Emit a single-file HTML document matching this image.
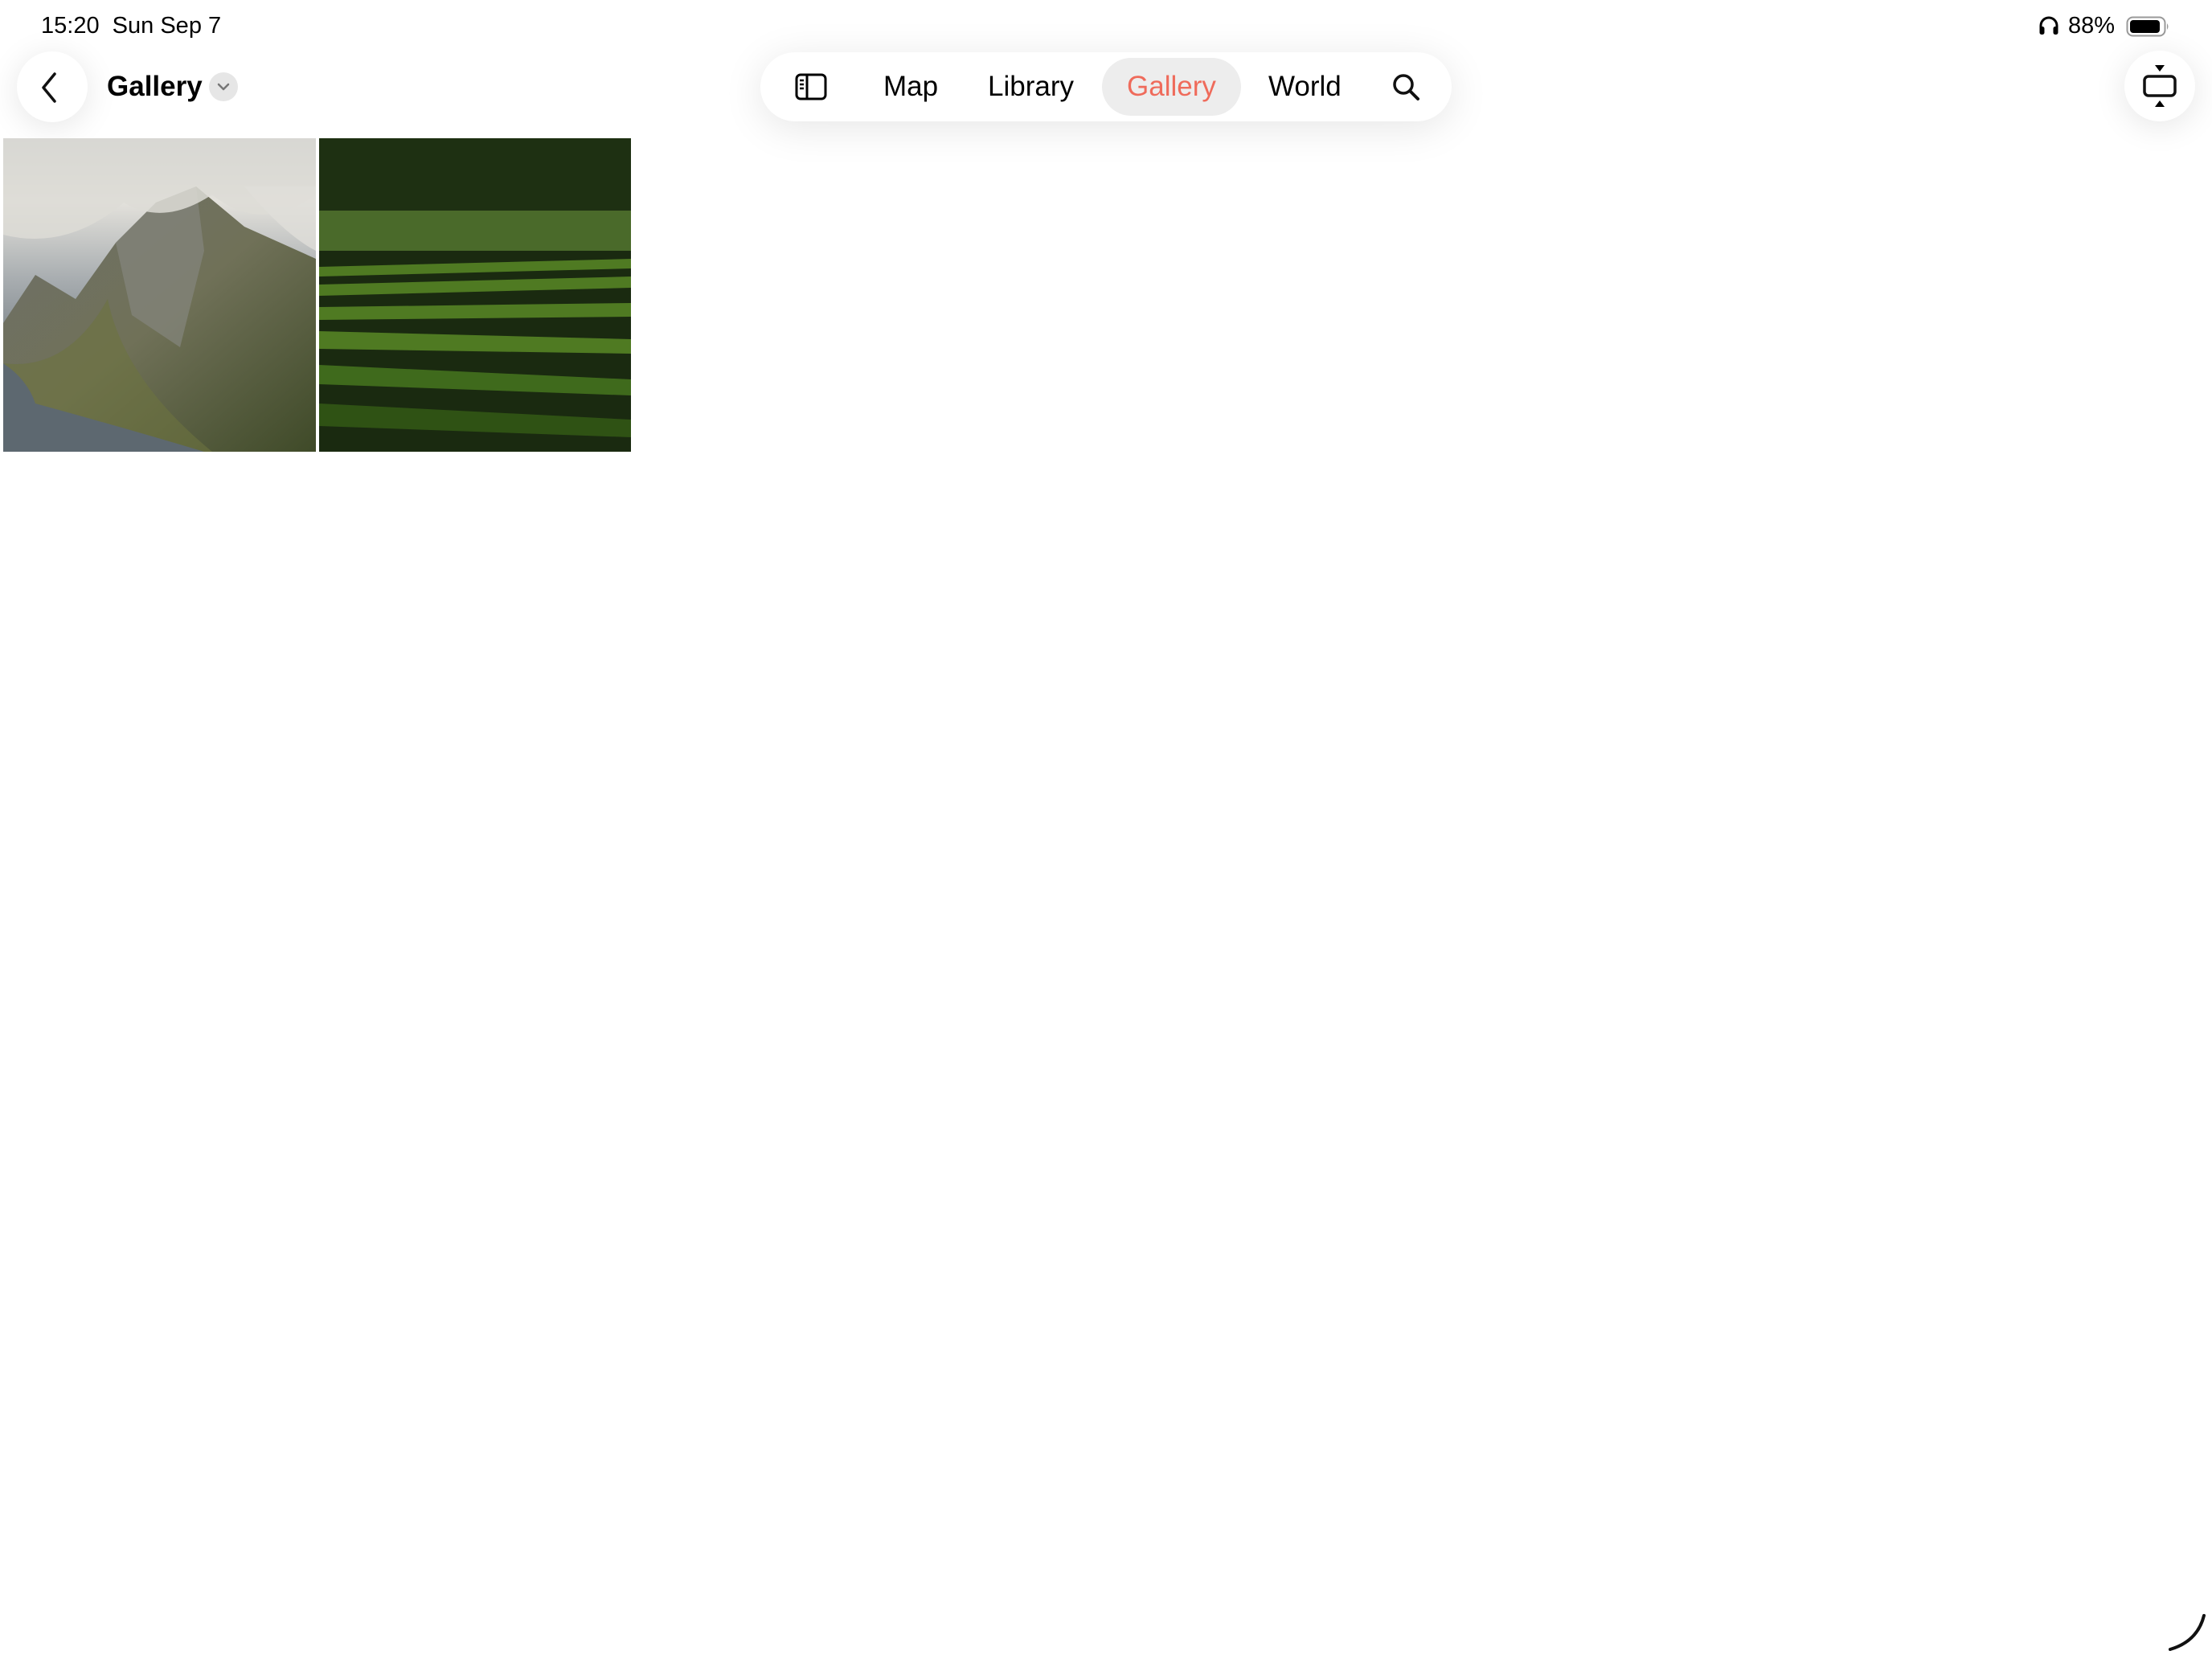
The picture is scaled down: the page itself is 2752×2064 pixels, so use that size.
<!DOCTYPE html>
<html><head><meta charset="utf-8"><style>
html,body{margin:0;padding:0;background:#fff;width:2752px;height:2064px;overflow:hidden;position:relative;font-family:"Liberation Sans",sans-serif;color:#000}
.abs{position:absolute}
.st{font-size:29px;top:16px}
.circ{position:absolute;width:88px;height:88px;border-radius:50%;background:#fff;box-shadow:0 6px 40px rgba(0,0,0,0.10)}
.pill{left:946px;top:65px;width:860px;height:86px;border-radius:43px;background:#fff;box-shadow:0 8px 50px rgba(0,0,0,0.10)}
.nav{font-size:35px;top:87px;line-height:42px}
</style></head><body>
<div class="abs st" style="left:51px">15:20&nbsp;&nbsp;Sun Sep 7</div>
<svg class="abs" style="left:2536px;top:19px" width="26" height="26" viewBox="0 0 26 26"><path d="M3 20 V13 A10 10 0 0 1 23 13 V20" fill="none" stroke="#000" stroke-width="3"/><rect x="1.5" y="14" width="6" height="10" rx="2.5"/><rect x="18.5" y="14" width="6" height="10" rx="2.5"/></svg>
<div class="abs st" style="left:2573px">88%</div>
<svg class="abs" style="left:2645px;top:20px" width="56" height="26" viewBox="0 0 56 26"><rect x="1.5" y="1.5" width="47" height="23" rx="7" fill="none" stroke="#999" stroke-width="2"/><rect x="5" y="5" width="37" height="16" rx="4"/><path d="M51 9 Q54 13 51 17Z" fill="#999"/></svg>

<div class="circ" style="left:21px;top:64px"></div>
<svg class="abs" style="left:46px;top:88px" width="30" height="42" viewBox="0 0 30 42"><path d="M22 4 L8 21 L22 38" fill="none" stroke="#111" stroke-width="3.5" stroke-linecap="round" stroke-linejoin="round"/></svg>
<div class="abs" style="left:133px;top:87px;font-size:35px;font-weight:bold;line-height:42px">Gallery</div>
<div class="abs" style="left:260px;top:90px;width:36px;height:36px;border-radius:50%;background:#e6e6e6"></div>
<svg class="abs" style="left:260px;top:90px" width="36" height="36" viewBox="0 0 36 36"><path d="M12 15 L18 21 L24 15" fill="none" stroke="#777" stroke-width="2.5" stroke-linecap="round" stroke-linejoin="round"/></svg>

<div class="abs pill"></div>
<div class="abs" style="left:1371px;top:72px;width:173px;height:72px;border-radius:36px;background:#ededed"></div>
<svg class="abs" style="left:988px;top:90px" width="42" height="36" viewBox="0 0 42 36"><rect x="3" y="3" width="36" height="30" rx="5" fill="none" stroke="#000" stroke-width="3"/><line x1="16" y1="3" x2="16" y2="33" stroke="#000" stroke-width="3"/><line x1="7" y1="10" x2="12" y2="10" stroke="#000" stroke-width="2.5"/><line x1="7" y1="15" x2="12" y2="15" stroke="#000" stroke-width="2.5"/><line x1="7" y1="20" x2="12" y2="20" stroke="#000" stroke-width="2.5"/></svg>
<div class="abs nav" style="left:1099px">Map</div>
<div class="abs nav" style="left:1229px">Library</div>
<div class="abs nav" style="left:1402px;color:#ef6b5b">Gallery</div>
<div class="abs nav" style="left:1578px">World</div>
<svg class="abs" style="left:1731px;top:90px" width="38" height="38" viewBox="0 0 38 38"><circle cx="15" cy="15" r="11" fill="none" stroke="#111" stroke-width="3.5"/><line x1="23" y1="23" x2="33" y2="33" stroke="#111" stroke-width="4" stroke-linecap="round"/></svg>

<div class="circ" style="left:2643px;top:63px"></div>
<svg class="abs" style="left:2663px;top:78px" width="48" height="58" viewBox="0 0 48 58"><path d="M18 3 H30 L24 11Z"/><rect x="5" y="17" width="38" height="24" rx="5" fill="none" stroke="#111" stroke-width="3.5"/><path d="M18 55 H30 L24 47Z"/></svg>

<svg class="abs" style="left:4px;top:172px" width="389" height="390" viewBox="0 0 389 390">
<defs><linearGradient id="sky" x1="0" y1="0" x2="0" y2="1"><stop offset="0" stop-color="#b8bcbf"/><stop offset="0.2" stop-color="#e4e2dc"/><stop offset="0.45" stop-color="#a8adb0"/><stop offset="0.6" stop-color="#8a9196"/></linearGradient>
<linearGradient id="mt" x1="0" y1="0" x2="1" y2="1"><stop offset="0" stop-color="#6e706a"/><stop offset="0.5" stop-color="#707158"/><stop offset="1" stop-color="#3f4a28"/></linearGradient></defs>
<rect width="389" height="390" fill="url(#sky)"/>
<path d="M0 230 L40 170 L90 200 L140 130 L190 80 L240 60 L300 110 L389 150 L389 390 L0 390Z" fill="url(#mt)"/>
<path d="M140 130 L190 80 L240 60 L250 140 L220 260 L160 220Z" fill="#85867d" opacity="0.7"/>
<path d="M0 280 Q80 290 130 200 Q150 300 260 390 L0 390Z" fill="#6d7340" opacity="0.6"/>
<path d="M0 280 Q30 300 40 330 Q150 360 250 390 L0 390Z" fill="#5d6870"/>
<path d="M0 0 H389 V70 Q320 120 260 70 Q200 110 150 80 Q80 140 0 120Z" fill="#dddcd6" opacity="0.85"/>
<path d="M300 60 Q350 120 389 140 V60Z" fill="#e0dfda" opacity="0.8"/>
</svg>
<svg class="abs" style="left:397px;top:172px" width="388" height="390" viewBox="0 0 388 390">
<rect width="388" height="390" fill="#1a2a10"/>
<rect y="0" width="388" height="110" fill="#1e3012"/>
<rect y="90" width="388" height="50" fill="#4a6a2a"/>
<g fill="#4f7a22">
<path d="M0 160 L388 150 L388 162 L0 172Z"/><path d="M0 182 L388 172 L388 186 L0 196Z"/><path d="M0 210 L388 205 L388 222 L0 226Z"/><path d="M0 240 L388 250 L388 268 L0 262Z"/><path d="M0 282 L388 300 L388 320 L0 306Z" fill="#3f6a1c"/><path d="M0 330 L388 350 L388 372 L0 358Z" fill="#2f5214"/></g>
</svg>

<svg class="abs" style="left:2694px;top:2006px" width="52" height="52" viewBox="0 0 52 52"><path d="M48 4 Q40 36 6 46" fill="none" stroke="#111" stroke-width="4" stroke-linecap="round"/></svg>
</body></html>
